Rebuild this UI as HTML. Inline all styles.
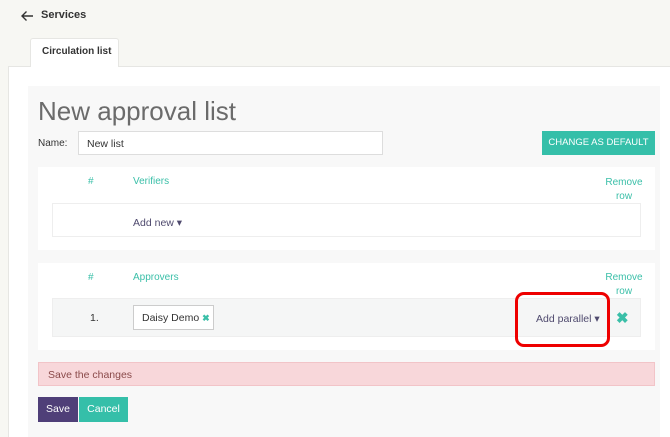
<!DOCTYPE html>
<html><head><style>
*{box-sizing:border-box;margin:0;padding:0}
html,body{width:670px;height:437px;overflow:hidden}
body{background:#f7f7f3;font-family:"Liberation Sans",sans-serif;font-size:11px;color:#333;position:relative}
.a{position:absolute}
.teal{color:#3abfa8}
</style></head><body>
<svg class="a" style="left:20px;top:10px" width="14" height="12" viewBox="0 0 14 12"><path d="M13 6H2M6.5 1.5L2 6l4.5 4.5" fill="none" stroke="#333" stroke-width="1.4"/></svg>
<div class="a" style="left:41px;top:9px;font-weight:bold;font-size:11px;color:#333">Services</div>
<div class="a" style="left:8px;top:66px;width:670px;height:371px;background:#fff;border:1px solid #e6e6e3;border-bottom:none"></div>
<div class="a" style="left:30px;top:38px;width:89px;height:29px;background:#fff;border:1px solid #e6e6e3;border-bottom:none;border-radius:3px 3px 0 0"></div>
<div class="a" style="left:42px;top:46px;font-weight:bold;font-size:10px">Circulation list</div>
<div class="a" style="left:28px;top:86px;width:632px;height:351px;background:#f8f8f8"></div>
<div class="a" style="left:38px;top:96px;font-size:26px;color:#6b6b6b">New approval list</div>
<div class="a" style="left:38px;top:138px;font-size:10px">Name:</div>
<div class="a" style="left:78px;top:131px;width:305px;height:24px;background:#fff;border:1px solid #ddd;padding:6px 8px;font-size:10.5px">New list</div>
<div class="a" style="left:542px;top:131px;width:113px;height:24px;background:#35bfa9;color:#fff;font-size:9.5px;text-align:center;line-height:24px">CHANGE AS DEFAULT</div>

<div class="a" style="left:38px;top:167px;width:617px;height:83px;background:#fff"></div>
<div class="a teal" style="left:88px;top:176px;font-size:10px">#</div>
<div class="a teal" style="left:133px;top:176px;font-size:10px">Verifiers</div>
<div class="a teal" style="left:600px;top:176px;font-size:10px;text-align:center;line-height:14px;width:48px">Remove<br>row</div>
<div class="a" style="left:52px;top:203px;width:589px;height:34px;border:1px solid #eee;background:#fff"></div>
<div class="a" style="left:133px;top:217px;font-size:10.5px;color:#4f4a6e">Add new ▾</div>

<div class="a" style="left:38px;top:263px;width:617px;height:87px;background:#fff"></div>
<div class="a teal" style="left:88px;top:272px;font-size:10px">#</div>
<div class="a teal" style="left:133px;top:272px;font-size:10px">Approvers</div>
<div class="a teal" style="left:600px;top:271px;font-size:10px;text-align:center;line-height:14px;width:48px">Remove<br>row</div>
<div class="a" style="left:52px;top:298px;width:589px;height:39px;background:#f5f6f6;border:1px solid #eee"></div>
<div class="a" style="left:90px;top:312px;font-size:10.5px">1.</div>
<div class="a" style="left:133px;top:305px;width:81px;height:25px;background:#fff;border:1px solid #ccc;padding:6px 0 0 8px;font-size:10.5px;white-space:nowrap">Daisy Demo <span class="teal" style="font-weight:bold;font-size:9px">✖</span></div>
<div class="a" style="left:536px;top:313px;font-size:10.5px;color:#4f4a6e">Add parallel ▾</div>
<div class="a teal" style="left:616px;top:309px;font-size:15px;font-weight:bold">✖</div>
<div class="a" style="left:515px;top:292px;width:95px;height:55px;border:3px solid #e00;border-radius:9px"></div>

<div class="a" style="left:38px;top:362px;width:617px;height:24px;background:#f8d7da;border:1px solid #f2c4c8;color:#8a4a4a;font-size:10.5px;padding:6px 9px">Save the changes</div>
<div class="a" style="left:38px;top:397px;width:40px;height:25px;background:#4f3f78;color:#fff;font-size:10.5px;text-align:center;line-height:25px">Save</div>
<div class="a" style="left:79px;top:397px;width:49px;height:25px;background:#35bfa9;color:#fff;font-size:10.5px;text-align:center;line-height:25px">Cancel</div>
</body></html>
